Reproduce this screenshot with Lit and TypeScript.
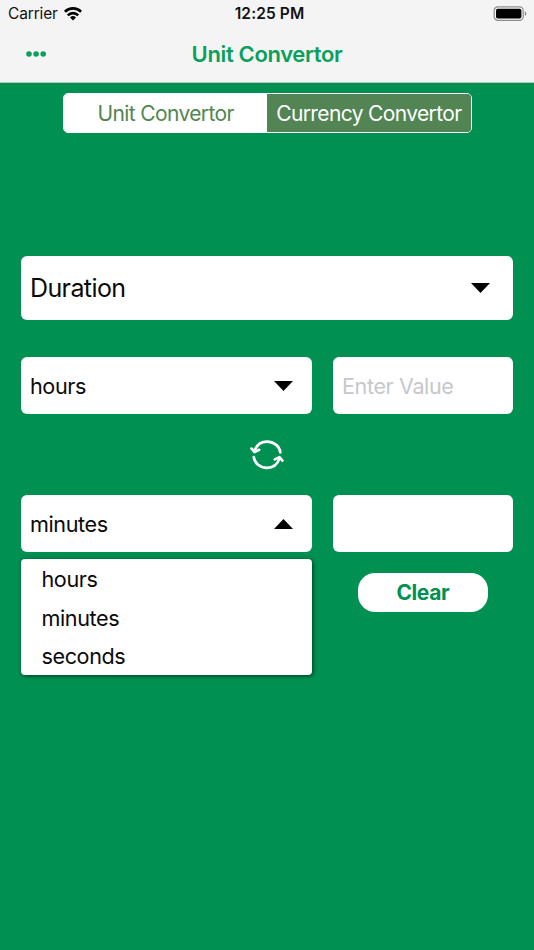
import { html, LitElement, css, svg, nothing } from "lit";
import { customElement, property, state } from "lit/decorators.js";

@customElement('status-bar')
export class StatusBar extends LitElement {
    static styles = css`
        :host {
            display: grid;
            grid-template-columns: 1fr auto 1fr;
            align-items: center;
            height: 27px;
            padding: 0 7px 0 8px;
            font-size: 15.5px;
            color: #111;
        }

        .carrier {
            display: flex;
            align-items: center;
            gap: 6.5px;
        }

        .time {
            padding-left: 4px;
            font-weight: 600;
            letter-spacing: 0.1px;
        }

        .battery {
            justify-self: end;
        }

        svg {
            display: block;
        }
    `

    render() {
        return html`
            <div class="carrier">
                <span>Carrier</span>
                <svg width="18" height="14" viewBox="0 0 18 14">
                    <g fill="none" stroke="#000" stroke-width="2.6">
                        <path d="M0.9 4.7A11.6 11.6 0 0 1 17.1 4.7" />
                        <path d="M3.8 8.3A7.4 7.4 0 0 1 14.2 8.3" />
                    </g>
                    <path d="M6 10.4A4.4 4.4 0 0 1 12 10.4L9 13.4Z" />
                </svg>
            </div>
            <div class="time">12:25 PM</div>
            <svg class="battery" width="34" height="15" viewBox="0 0 34 15">
                <rect x="1.2" y="0.9" width="29" height="13.4" rx="3.6" fill="none" stroke="#8c8c8c" stroke-width="1.2" />
                <rect x="3" y="2.7" width="25.4" height="9.8" rx="1.8" />
                <path d="M31.8 5.2Q33.4 6 33.4 7.6T31.8 10Z" fill="#8c8c8c" />
            </svg>
        `;
    }
}

@customElement('unit-select')
export class UnitSelect extends LitElement {
    @property()
    value = '';

    @property({ type: Array })
    options: string[] = [];

    @property({ type: Boolean })
    open = false;

    static styles = css`
        :host {
            display: block;
            position: relative;
        }

        .field {
            box-sizing: border-box;
            height: 100%;
            display: flex;
            align-items: center;
            justify-content: space-between;
            padding: 0 var(--arrow-inset, 19.5px) 0 9px;
            border-radius: 6px;
            background-color: white;
        }

        .arrow {
            display: block;
        }

        .menu {
            position: absolute;
            top: calc(100% + 6.4px);
            left: 0;
            right: 0;
            padding: 1.4px 0 0;
            border-radius: 4px;
            background-color: white;
            box-shadow: 1px 1px 4px rgba(0, 0, 0, 0.6);
        }

        .option {
            height: 38.3px;
            line-height: 39px;
            padding-left: 20.5px;
        }
    `

    render() {
        return html`
            <div class="field" @click=${() => this.open = !this.open}>
                <span>${this.value}</span>
                <svg class="arrow" width="19" height="10" viewBox="0 0 19 10">
                    ${this.open ? svg`<path d="M0 10L9.5 0L19 10Z" />` : svg`<path d="M0 0H19L9.5 10Z" />`}
                </svg>
            </div>
            ${this.open ? html`
                <div class="menu">
                    ${this.options.map(option => html`
                        <div class="option" @click=${() => { this.value = option; this.open = false; }}>${option}</div>
                    `)}
                </div>
            ` : nothing}
        `;
    }
}

@customElement('app-root')
export class AppRoot extends LitElement {
    @state()
    private tab = 'unit';

    private units = ['hours', 'minutes', 'seconds'];

    static styles = css`
        :host {
            display: flex;
            flex-direction: column;
            height: 950px;
            background-color: #009051;
            font-family: Inter, "Liberation Sans", sans-serif;
            font-size: 21.6px;
            letter-spacing: -0.4px;
            color: #0a0a0a;
        }

        status-bar {
            letter-spacing: -0.15px;
        }

        .header {
            box-sizing: border-box;
            height: 83px;
            background-color: #f4f4f4;
            border-bottom: 1px solid #b5c4bc;
        }

        .nav {
            display: grid;
            grid-template-columns: 1fr auto 1fr;
            align-items: center;
            height: 54px;
            padding: 0 25.5px;
            color: #0b9f5c;
        }

        .title {
            font-weight: 600;
            font-size: 22px;
            letter-spacing: -0.35px;
        }

        .dots {
            display: block;
        }

        .tabs {
            box-sizing: border-box;
            display: grid;
            grid-template-columns: 1fr 1fr;
            width: 408.5px;
            height: 40px;
            margin: 10.3px 0 0 63px;
            border: 1.5px solid white;
            border-radius: 5px;
            overflow: hidden;
            font-size: 21px;
            line-height: 26px;
            letter-spacing: -0.63px;
        }

        .tab {
            display: flex;
            align-items: center;
            justify-content: center;
            padding-top: 1px;
            background-color: #528553;
            color: white;
            white-space: nowrap;
        }

        .tab.active {
            background-color: white;
            color: #528553;
        }

        .form {
            display: flex;
            flex-direction: column;
            padding: 123px 21px 0;
        }

        .category {
            --arrow-inset: 23px;
            height: 64px;
            font-size: 25px;
            line-height: 33px;
            letter-spacing: -0.6px;
        }

        .row {
            display: grid;
            grid-template-columns: 291px 180px;
            justify-content: space-between;
            height: 57.5px;
        }

        .from {
            margin-top: 36.7px;
        }

        .value {
            box-sizing: border-box;
            width: 100%;
            height: 100%;
            border: none;
            border-radius: 6px;
            padding: 0 9px;
            font: inherit;
            letter-spacing: inherit;
            background-color: white;
        }

        .value::placeholder {
            color: #c7c7cc;
        }

        .swap {
            display: flex;
            align-items: center;
            justify-content: center;
            height: 80.5px;
        }

        .clear {
            align-self: flex-end;
            width: 129.5px;
            height: 39px;
            margin: 20.5px 25.5px 0 0;
            border: none;
            border-radius: 17px;
            padding: 1px 0 0;
            background-color: white;
            color: #009051;
            font: inherit;
            font-weight: 700;
            font-size: 21px;
            letter-spacing: inherit;
        }
    `

    render() {
        return html`
            <div class="header">
                <status-bar></status-bar>
                <div class="nav">
                    <svg class="dots" width="21" height="6" viewBox="0 0 21 6" fill="currentColor">
                        <circle cx="3" cy="3" r="2.8" />
                        <circle cx="10.1" cy="3" r="2.8" />
                        <circle cx="17.2" cy="3" r="2.8" />
                    </svg>
                    <div class="title">Unit Convertor</div>
                </div>
            </div>
            <div class="tabs">
                <div class="tab ${this.tab === 'unit' ? 'active' : ''}" @click=${() => this.tab = 'unit'}>Unit Convertor</div>
                <div class="tab ${this.tab === 'currency' ? 'active' : ''}" @click=${() => this.tab = 'currency'}>Currency Convertor</div>
            </div>
            <div class="form">
                <unit-select class="category" value="Duration"></unit-select>
                <div class="row from">
                    <unit-select value="hours" .options=${this.units}></unit-select>
                    <input class="value" placeholder="Enter Value">
                </div>
                <div class="swap">
                    <svg width="34" height="30" viewBox="0 0 34 30" fill="none" stroke="white" stroke-width="2.7" stroke-linecap="round" stroke-linejoin="round">
                        <path d="M4.6 10.8C6.6 5 11.4 1.6 17 1.6C23.8 1.6 29.6 6.2 30.3 12.4" />
                        <path d="M1.6 8.6L4.6 12L9.2 9.8" />
                        <path d="M29.4 18.6C27.4 24.4 22.6 27.8 17 27.8C10.2 27.8 4.4 23.2 3.7 17" />
                        <path d="M32.4 20.6L29.4 17.2L24.8 19.4" />
                    </svg>
                </div>
                <div class="row">
                    <unit-select value="minutes" .options=${this.units} open></unit-select>
                    <input class="value">
                </div>
                <button class="clear">Clear</button>
            </div>
        `;
    }
}
